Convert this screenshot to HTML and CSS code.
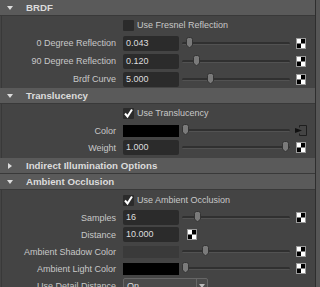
FILE: index.html
```html
<!DOCTYPE html>
<html>
<head>
    <title>Attribute Editor</title>
    <link rel="stylesheet" href="styles.css">
</head>
<body>
<div class="panel">
    <div class="section brdf">
        <div class="head"><span class="arrow"></span>BRDF</div>
        <div class="body">
            <div class="row check">
                <span class="label"></span><span class="box"></span><span class="box-text">Use Fresnel Reflection</span>
            </div>
            <div class="row">
                <span class="label">0 Degree Reflection</span>
                <span class="field">0.043</span>
                <span class="slider"><span class="knob" style="left: 3px"><svg width="9" height="12" viewBox="0 0 9 12"><path d="M1.5 2.5 q0 -2 2 -2 h2 q2 0 2 2 v5.5 l-3 3 l-3 -3 z" fill="#7a7a7a" stroke="#333"/></svg></span></span>
                <svg class="map" width="10" height="11" viewBox="0 0 10 11"><rect x="0.5" y="0.5" width="9" height="10" fill="#fff" stroke="#9a9a9a"/><rect x="5" y="1" width="4" height="4.5" fill="#000"/><rect x="1" y="5.5" width="4" height="4.5" fill="#000"/></svg>
            </div>
            <div class="row">
                <span class="label">90 Degree Reflection</span>
                <span class="field">0.120</span>
                <span class="slider"><span class="knob" style="left: 10px"><svg width="9" height="12" viewBox="0 0 9 12"><path d="M1.5 2.5 q0 -2 2 -2 h2 q2 0 2 2 v5.5 l-3 3 l-3 -3 z" fill="#7a7a7a" stroke="#333"/></svg></span></span>
                <svg class="map" width="10" height="11" viewBox="0 0 10 11"><rect x="0.5" y="0.5" width="9" height="10" fill="#fff" stroke="#9a9a9a"/><rect x="5" y="1" width="4" height="4.5" fill="#000"/><rect x="1" y="5.5" width="4" height="4.5" fill="#000"/></svg>
            </div>
            <div class="row">
                <span class="label">Brdf Curve</span>
                <span class="field">5.000</span>
                <span class="slider"><span class="knob" style="left: 24px"><svg width="9" height="12" viewBox="0 0 9 12"><path d="M1.5 2.5 q0 -2 2 -2 h2 q2 0 2 2 v5.5 l-3 3 l-3 -3 z" fill="#7a7a7a" stroke="#333"/></svg></span></span>
                <svg class="map" width="10" height="11" viewBox="0 0 10 11"><rect x="0.5" y="0.5" width="9" height="10" fill="#fff" stroke="#9a9a9a"/><rect x="5" y="1" width="4" height="4.5" fill="#000"/><rect x="1" y="5.5" width="4" height="4.5" fill="#000"/></svg>
            </div>
        </div>
    </div>

    <div class="section trans">
        <div class="head"><span class="arrow"></span>Translucency</div>
        <div class="body">
            <div class="row check">
                <span class="label"></span>
                <span class="box"><svg width="11" height="11" viewBox="0 0 11 11"><path d="M2 5.5 l2.5 3 l4.5 -7" fill="none" stroke="#fff" stroke-width="2"/></svg></span>
                <span class="box-text">Use Translucency</span>
            </div>
            <div class="row">
                <span class="label">Color</span>
                <span class="swatch"></span>
                <span class="slider"><span class="knob" style="left: -1px"><svg width="9" height="12" viewBox="0 0 9 12"><path d="M1.5 2.5 q0 -2 2 -2 h2 q2 0 2 2 v5.5 l-3 3 l-3 -3 z" fill="#7a7a7a" stroke="#333"/></svg></span></span>
                <svg class="map link" width="12" height="11" viewBox="0 0 12 11"><path d="M4.5 0.5 h7 v10 h-7" fill="none" stroke="#1e1e1e"/><path d="M4.5 0.5 v2 M4.5 10.5 v-2" stroke="#1e1e1e"/><polygon points="0,3 7,5.5 0,8" fill="#111"/></svg>
            </div>
            <div class="row">
                <span class="label">Weight</span>
                <span class="field">1.000</span>
                <span class="slider"><span class="knob" style="left: 99px"><svg width="9" height="12" viewBox="0 0 9 12"><path d="M1.5 2.5 q0 -2 2 -2 h2 q2 0 2 2 v5.5 l-3 3 l-3 -3 z" fill="#7a7a7a" stroke="#333"/></svg></span></span>
                <svg class="map" width="10" height="11" viewBox="0 0 10 11"><rect x="0.5" y="0.5" width="9" height="10" fill="#fff" stroke="#9a9a9a"/><rect x="5" y="1" width="4" height="4.5" fill="#000"/><rect x="1" y="5.5" width="4" height="4.5" fill="#000"/></svg>
            </div>
        </div>
    </div>

    <div class="section">
        <div class="head"><span class="arrow closed"></span>Indirect Illumination Options</div>
    </div>

    <div class="section ao">
        <div class="head"><span class="arrow"></span>Ambient Occlusion</div>
        <div class="body">
            <div class="row check">
                <span class="label"></span>
                <span class="box"><svg width="11" height="11" viewBox="0 0 11 11"><path d="M2 5.5 l2.5 3 l4.5 -7" fill="none" stroke="#fff" stroke-width="2"/></svg></span>
                <span class="box-text">Use Ambient Occlusion</span>
            </div>
            <div class="row">
                <span class="label">Samples</span>
                <span class="field">16</span>
                <span class="slider"><span class="knob" style="left: 11px"><svg width="9" height="12" viewBox="0 0 9 12"><path d="M1.5 2.5 q0 -2 2 -2 h2 q2 0 2 2 v5.5 l-3 3 l-3 -3 z" fill="#7a7a7a" stroke="#333"/></svg></span></span>
                <svg class="map" width="10" height="11" viewBox="0 0 10 11"><rect x="0.5" y="0.5" width="9" height="10" fill="#fff" stroke="#9a9a9a"/><rect x="5" y="1" width="4" height="4.5" fill="#000"/><rect x="1" y="5.5" width="4" height="4.5" fill="#000"/></svg>
            </div>
            <div class="row">
                <span class="label">Distance</span>
                <span class="field">10.000</span>
                <svg class="map near" width="10" height="11" viewBox="0 0 10 11"><rect x="0.5" y="0.5" width="9" height="10" fill="#fff" stroke="#9a9a9a"/><rect x="5" y="1" width="4" height="4.5" fill="#000"/><rect x="1" y="5.5" width="4" height="4.5" fill="#000"/></svg>
            </div>
            <div class="row">
                <span class="label">Ambient Shadow Color</span>
                <span class="swatch grey"></span>
                <span class="slider"><span class="knob" style="left: 19px"><svg width="9" height="12" viewBox="0 0 9 12"><path d="M1.5 2.5 q0 -2 2 -2 h2 q2 0 2 2 v5.5 l-3 3 l-3 -3 z" fill="#7a7a7a" stroke="#333"/></svg></span></span>
                <svg class="map" width="10" height="11" viewBox="0 0 10 11"><rect x="0.5" y="0.5" width="9" height="10" fill="#fff" stroke="#9a9a9a"/><rect x="5" y="1" width="4" height="4.5" fill="#000"/><rect x="1" y="5.5" width="4" height="4.5" fill="#000"/></svg>
            </div>
            <div class="row">
                <span class="label">Ambient Light Color</span>
                <span class="swatch"></span>
                <span class="slider"><span class="knob" style="left: -1px"><svg width="9" height="12" viewBox="0 0 9 12"><path d="M1.5 2.5 q0 -2 2 -2 h2 q2 0 2 2 v5.5 l-3 3 l-3 -3 z" fill="#7a7a7a" stroke="#333"/></svg></span></span>
                <svg class="map" width="10" height="11" viewBox="0 0 10 11"><rect x="0.5" y="0.5" width="9" height="10" fill="#fff" stroke="#9a9a9a"/><rect x="5" y="1" width="4" height="4.5" fill="#000"/><rect x="1" y="5.5" width="4" height="4.5" fill="#000"/></svg>
            </div>
            <div class="row">
                <span class="label">Use Detail Distance</span>
                <span class="combo"><span class="combo-text">On</span><span class="combo-btn"></span></span>
            </div>
        </div>
    </div>
</div>
</body>
</html>
```

FILE: styles.css
```css
body {
    margin: 0;
    background: #565656;
    font-family: "Liberation Sans", Arial, sans-serif;
    font-size: 9px;
    color: #c8c8c8;
}
.panel {
    width: 315px;
    height: 287px;
    overflow: hidden;
    background: #444;
    border-right: 1px solid #2e2e2e;
}
.head {
    display: flex;
    align-items: center;
    height: 15px;
    background: #5a5a5a;
    border-bottom: 1px solid #393939;
    font-size: 9.7px;
    font-weight: bold;
    color: #dcdcdc;
}
.arrow {
    width: 0;
    height: 0;
    margin: 0 13px 0 7px;
    border-left: 3px solid transparent;
    border-right: 3px solid transparent;
    border-top: 4px solid #dcdcdc;
}
.arrow.closed {
    margin: 0 14px 0 8px;
    border-top: 3px solid transparent;
    border-bottom: 3px solid transparent;
    border-left: 4px solid #dcdcdc;
    border-right: 0;
}
.body {
    margin-left: 1px;
    border-left: 1px solid #393939;
}
.trans .body {
    padding-bottom: 2px;
}
.ao .body {
    padding-top: 1px;
}
.row {
    display: flex;
    align-items: center;
    height: 17px;
}
.brdf .row,
.row.check {
    height: 18px;
}
.label {
    flex: none;
    width: 114px;
    text-align: right;
    white-space: nowrap;
}
.field {
    box-sizing: border-box;
    width: 56px;
    height: 15px;
    margin-left: 7px;
    padding-left: 3px;
    line-height: 15px;
    background: #2b2b2b;
    border-radius: 2px;
    color: #dedede;
}
.box {
    display: block;
    width: 11px;
    height: 11px;
    margin-left: 7px;
    background: #2b2b2b;
    border-radius: 1px;
}
.box svg {
    display: block;
}
.box-text {
    margin-left: 3px;
}
.swatch {
    width: 56px;
    height: 12px;
    margin-left: 7px;
    background: #000;
}
.swatch.grey {
    background: #3a3a3a;
}
.slider {
    position: relative;
    width: 108px;
    height: 15px;
    margin-left: 3px;
}
.slider::before {
    content: "";
    position: absolute;
    left: 0;
    right: 0;
    top: 6px;
    height: 2px;
    background: #303030;
    border-bottom: 1px solid #525252;
    border-radius: 2px;
}
.knob {
    position: absolute;
    top: 1px;
}
.knob svg {
    display: block;
}
.map {
    display: block;
    margin-left: 6px;
}
.map.link {
    margin-left: 5px;
}
.map.near {
    margin-left: 8px;
}
.combo {
    display: flex;
    box-sizing: border-box;
    width: 85px;
    height: 16px;
    margin-left: 7px;
    background: #4a4a4a;
    border: 1px solid #666;
    border-radius: 2px;
}
.combo-text {
    flex: 1;
    padding-left: 3px;
    line-height: 14px;
    color: #dedede;
}
.combo-btn {
    position: relative;
    width: 10px;
    border-left: 1px solid #666;
}
.combo-btn::after {
    content: "";
    position: absolute;
    left: 2px;
    top: 5px;
    border-left: 3px solid transparent;
    border-right: 3px solid transparent;
    border-top: 4px solid #bbb;
}
```
